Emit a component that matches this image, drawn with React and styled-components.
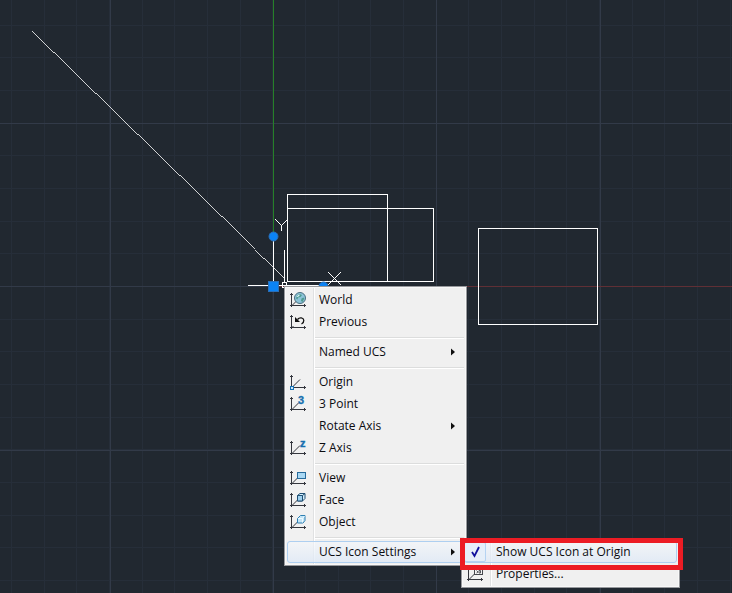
import React from "react";
import styled, { createGlobalStyle, css } from "styled-components";

const GlobalStyle = createGlobalStyle`
  *, *::before, *::after { box-sizing: border-box; }
  html, body, #root { height: 100%; }
  body { margin: 0; overflow: hidden; background: #212830; }
`;

const Workspace = styled.main`
  position: relative;
  min-height: 100vh;
  font-family: "Open Sans", "Noto Sans", sans-serif;
  font-size: 12px;
  line-height: 20px;
  color: #0c0c10;
`;

const Canvas = styled.svg`
  display: block;
  width: 100%;
  height: 100vh;
`;

const menuSurface = css`
  position: absolute;
  margin: 0;
  padding: 2px;
  list-style: none;
  border: 1px solid #97999d;
  background: linear-gradient(90deg, #f1f1f1 28px, #e0e1e2 28px, #e0e1e2 29px, #fff 29px, #fff 30px, #f0f0f0 30px);
  box-shadow: inset 0 0 0 1px #f8f8f8;
`;

const ContextMenu = styled.ul`
  ${menuSurface}
  left: 284px;
  top: 286px;
  min-width: 183px;
`;

const Submenu = styled.ul`
  ${menuSurface}
  left: calc(100% - 3px);
  top: -3px;
  min-width: 219px;
`;

const Entry = styled.li`
  position: relative;
`;

const Separator = styled.li`
  height: 8px;
  padding: 4px 0 0 28px;

  &::before {
    content: "";
    display: block;
    height: 2px;
    border-top: 1px solid #dcdddd;
    background: #fff;
  }
`;

const rowStyle = css`
  display: grid;
  grid-template-columns: 16px 1fr 8px;
  column-gap: 13px;
  align-items: center;
  width: 100%;
  height: 22px;
  padding: 0 6px 0 2px;
  border: 1px solid ${(p) => (p.$active ? "#aecff0" : "transparent")};
  border-radius: 3px;
  background: ${(p) =>
    p.$active ? "linear-gradient(rgba(244,247,251,.6), rgba(222,233,247,.75))" : "none"};
  font: inherit;
  color: inherit;
  text-align: left;
  white-space: nowrap;
`;

const MenuButton = styled.button`
  ${rowStyle}
`;

const CheckRow = styled.label`
  ${rowStyle}
  position: relative;
`;

const CheckBox = styled.input`
  appearance: none;
  grid-area: 1 / 1;
  justify-self: center;
  width: 22px;
  height: 20px;
  margin: 0;
  border: 1px solid #b5d3f2;
  border-radius: 2px;
  background: #e6eff9;
`;

const CheckMark = styled.svg`
  grid-area: 1 / 1;
  position: relative;
  width: 16px;
  height: 16px;
  pointer-events: none;
`;

const Label = styled.span`
  grid-column: 2;
`;

const Glyph = styled.svg`
  grid-column: 1;
  display: block;
  width: 16px;
  height: 16px;
  overflow: visible;
`;

const Arrow = styled.svg`
  grid-column: 3;
  display: block;
  width: 8px;
  height: 8px;
`;

const Highlight = styled.div`
  position: absolute;
  left: -2px;
  right: -4px;
  top: -1px;
  height: 32px;
  border: 5px solid #ec1c24;
  pointer-events: none;
`;

const Axes = ({ diagonal = "M2 13.5 7.5 8" }) => (
  <g fill="none" stroke="#34363d">
    <path d="M1.5 1V15M0 13.5H16" shapeRendering="crispEdges" />
    <path d="M0 2.5h3M14.5 12v3" shapeRendering="crispEdges" />
    <path d={diagonal} />
  </g>
);

const drawings = {
  world: (
    <>
      <Axes />
      <circle cx="10" cy="6" r="5.5" fill="#8cc3d8" stroke="#4a6f80" />
      <path d="M7 3.5 9.5 2l2.5 1-1.5 2-2.5.5-.5 2L6 6.5zM11.5 6.5l2-1 .8 1-1.8 3.5-1.5-1z" fill="#4f9c90" />
      <path d="M6.5 4.5 9 2.5l1 .5-2 2z" fill="#d9f3fa" />
    </>
  ),
  previous: (
    <>
      <Axes diagonal="M2 13.5 3.500 12" />
      <path d="M7.500 5.500c2-2.500 6-2 6.300.8.1 1.700-.8 2.900-2.300 3.700" fill="none" stroke="#101010" strokeWidth="1.300" />
      <path d="M5 3v5h5z" fill="#101010" />
    </>
  ),
  origin: (
    <>
      <Axes diagonal="M2 13.5 10 5.5" />
      <rect x="0.5" y="12.5" width="3" height="3" fill="#cfe9fb" stroke="#1672b5" />
    </>
  ),
  threePoint: (
    <>
      <Axes diagonal="M2 13.5 9 6.5" />
      <text x="8" y="8" fill="#176fae" stroke="#176fae" strokeWidth="0.3" fontFamily="Liberation Sans, sans-serif" fontWeight="700" fontSize="11">3</text>
    </>
  ),
  zAxis: (
    <>
      <Axes diagonal="M2 13.5 10 5.5" />
      <text x="10" y="7" fill="#176fae" stroke="#176fae" strokeWidth="0.4" fontFamily="Liberation Sans, sans-serif" fontWeight="700" fontSize="11">z</text>
    </>
  ),
  view: (
    <>
      <Axes />
      <rect x="7.5" y="2.5" width="8" height="6" fill="#a9d8f4" stroke="#276b9c" />
    </>
  ),
  face: (
    <>
      <Axes />
      <path d="M7.5 3.5 10 1.5h5v5l-2.5 2.5h-5z" fill="#d7effc" stroke="#204f73" />
      <path d="M7.5 3.5h5V9h-5zM12.5 3.5 15 1.5" fill="#9fd1ef" stroke="#204f73" />
    </>
  ),
  object: (
    <>
      <Axes />
      <path d="M7.5 4.5 10.5 1.5h4.5v5l-2 2.5h-5.5z" fill="#c4e6f8" stroke="#2d7fb2" strokeLinejoin="round" />
      <path d="M8 4.5h4.5V8.5M12.5 4.5 14.5 2" fill="none" stroke="#eefaff" />
    </>
  ),
  properties: (
    <>
      <Axes diagonal="M2 13.5 8 7.5" />
      <rect x="7.5" y="1.5" width="8" height="7" fill="#f4f4f4" stroke="#45474d" />
      <path d="M9.5 4.5 11 6l-1.5 1M12 4.5h1.5V7H12z" fill="none" stroke="#55575d" />
    </>
  ),
};

const entries = [
  { label: "World", icon: "world" },
  { label: "Previous", icon: "previous" },
  null,
  { label: "Named UCS", sub: true },
  null,
  { label: "Origin", icon: "origin" },
  { label: "3 Point", icon: "threePoint" },
  { label: "Rotate Axis", sub: true },
  { label: "Z Axis", icon: "zAxis" },
  null,
  { label: "View", icon: "view" },
  { label: "Face", icon: "face" },
  { label: "Object", icon: "object" },
  null,
  { label: "UCS Icon Settings", sub: true, open: true },
];

function Item({ label, icon, sub, open, children }) {
  return (
    <Entry role="none">
      <MenuButton
        type="button"
        role="menuitem"
        $active={open}
        aria-haspopup={sub ? "menu" : undefined}
        aria-expanded={sub ? Boolean(open) : undefined}
      >
        {icon && <Glyph viewBox="0 0 16 16" aria-hidden="true">{drawings[icon]}</Glyph>}
        <Label>{label}</Label>
        {sub && (
          <Arrow viewBox="0 0 8 8" aria-hidden="true">
            <path d="M2 0.5v7L6 4z" fill="#101010" />
          </Arrow>
        )}
      </MenuButton>
      {children}
    </Entry>
  );
}

function SettingsSubmenu() {
  return (
    <Submenu role="menu" aria-label="UCS Icon Settings">
      <Entry role="none">
        <CheckRow $active>
          <CheckBox type="checkbox" defaultChecked />
          <CheckMark viewBox="0 0 16 16" aria-hidden="true">
            <path d="M5 8 7.5 12 12 3" fill="none" stroke="#10109c" strokeWidth="1.8" />
          </CheckMark>
          <Label>Show UCS Icon at Origin</Label>
        </CheckRow>
      </Entry>
      <Item label="Properties..." icon="properties" />
      <Highlight />
    </Submenu>
  );
}

const range = (from, to, step) =>
  Array.from({ length: Math.ceil((to - from) / step) }, (_, i) => Math.floor(from + i * step) + 0.5);

const MINOR = 32.67;
const MAJOR = 163.2;

function Drawing() {
  return (
    <Canvas role="img" aria-label="Drawing area" shapeRendering="crispEdges">
      <g stroke="#262e39">
        {range(11.5, 2400, MINOR).map((x) => <line key={x} x1={x} x2={x} y1="0" y2="100%" />)}
        {range(25.2, 1600, MINOR).map((y) => <line key={y} y1={y} y2={y} x1="0" x2="100%" />)}
      </g>
      <g stroke="#323a48">
        {range(110.5, 2400, MAJOR).map((x) => <line key={x} x1={x} x2={x} y1="0" y2="100%" />)}
        {range(123.6, 1600, MAJOR).map((y) => <line key={y} y1={y} y2={y} x1="0" x2="100%" />)}
      </g>
      <rect x="273" y="0" width="1" height="286" fill="#268028" />
      <rect x="273" y="286" width="100%" height="1" fill="#602f35" />
      <g fill="none" stroke="#fff">
        <path d="M31.5 31.5 284.5 278.5" strokeWidth="0.8" />
        <rect x="287.5" y="194.5" width="100" height="87" />
        <rect x="287.5" y="208.5" width="146" height="73" />
        <rect x="478.5" y="228.5" width="119" height="96" />
        <path d="M273.5 237V286M284.5 250V280M248 285.5H323" />
        <path d="M275.5 219.5l6 6 6-6M281.5 225v6M328 272l13 13M341 272l-13 13" />
        <path d="M282.5 282.5h4v5h-4zM284.5 279v4M281 285.5h7" />
      </g>
      <g fill="#0b83f5" stroke="#2a6fb8" shapeRendering="auto">
        <circle cx="273.5" cy="236.5" r="4.5" />
        <circle cx="323.5" cy="286.5" r="4.5" />
        <rect x="268.5" y="281.5" width="10" height="10" />
      </g>
    </Canvas>
  );
}

export default function App() {
  return (
    <>
      <GlobalStyle />
      <Workspace>
        <Drawing />
        <ContextMenu role="menu" aria-label="UCS">
          {entries.map((entry, i) =>
            entry ? (
              <Item key={entry.label} {...entry}>
                {entry.open && <SettingsSubmenu />}
              </Item>
            ) : (
              <Separator key={i} role="separator" />
            )
          )}
        </ContextMenu>
      </Workspace>
    </>
  );
}
